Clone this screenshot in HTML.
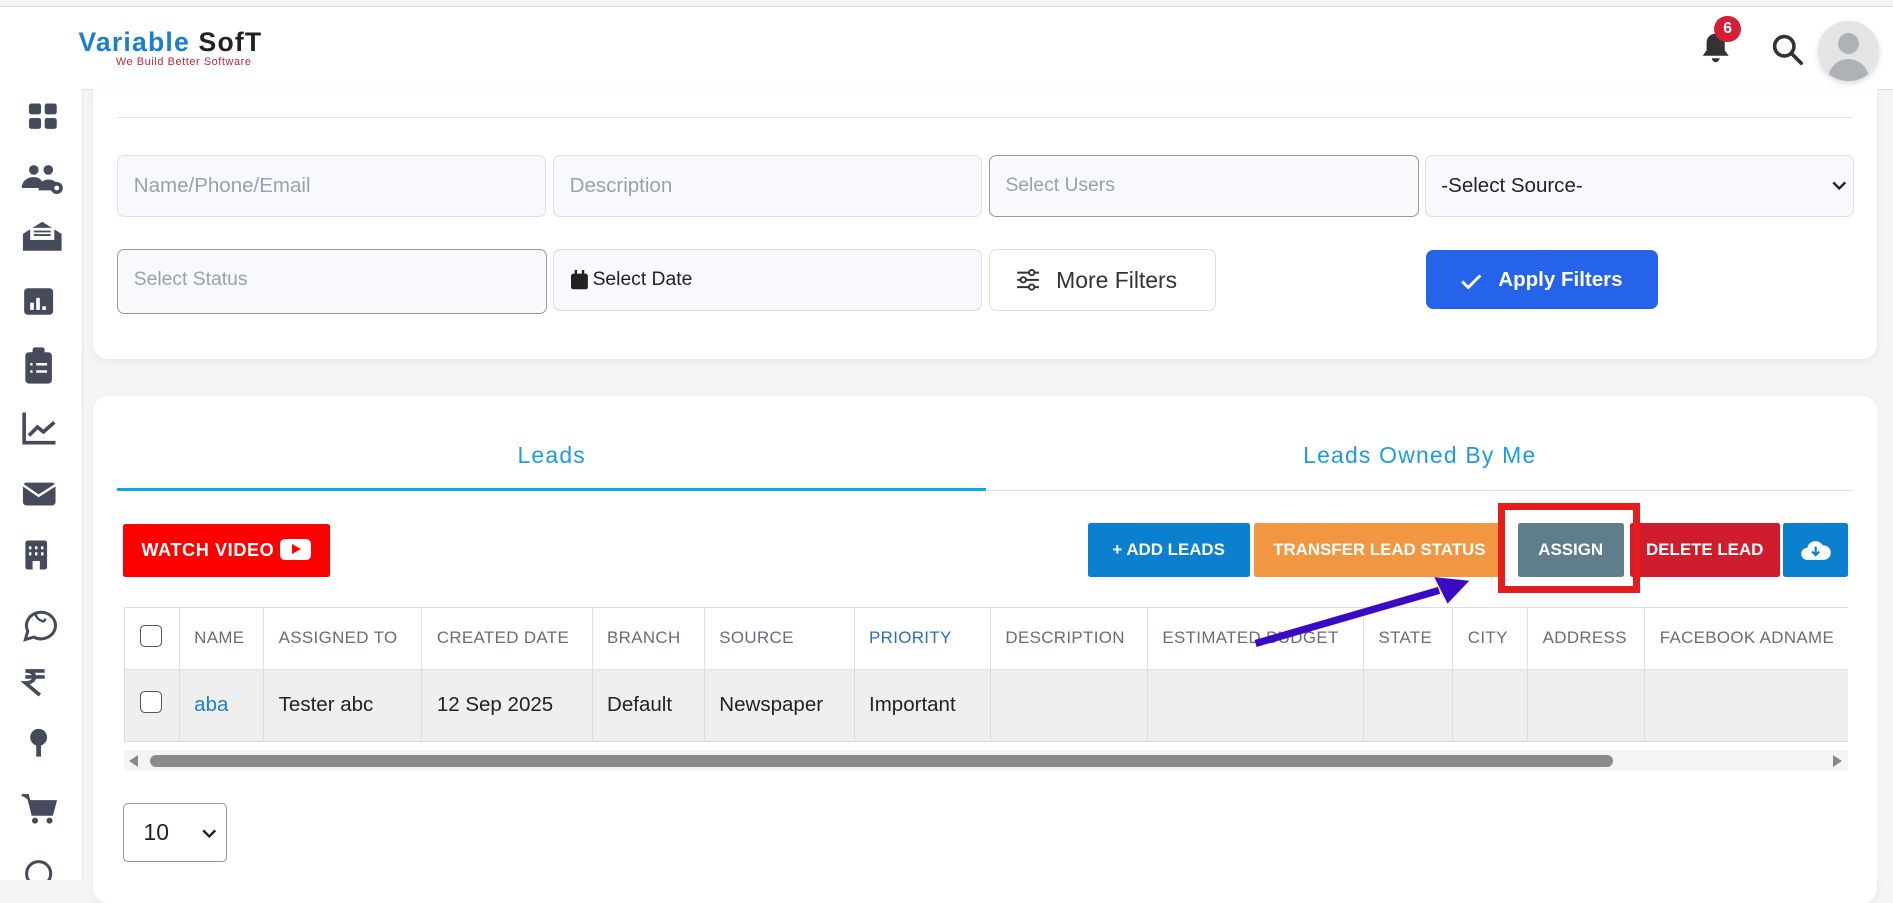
<!DOCTYPE html>
<html><head><meta charset="utf-8">
<style>
html,body{margin:0;padding:0;}
body{width:1568px;height:729px;overflow:hidden;zoom:1.2073;background:#f4f5f7;font-family:"Liberation Sans",sans-serif;position:relative;}
.abs{position:absolute;}
.hdr{left:0;top:5px;width:1568px;height:68px;background:#fff;border-top:1px solid #ddd;border-bottom:1px solid #ddd;}
.side{left:0;top:74px;width:68px;height:655px;background:#fff;border-right:1px solid #e6e6e6;}
.card{background:#fff;border-radius:12px;box-shadow:0 2px 6px rgba(0,0,0,.06);}
.inp{position:absolute;height:52px;border:1px solid #d8e0ea;border-radius:6px;background:#f7f9fc;box-sizing:border-box;padding-left:13px;line-height:50px;font-size:17px;color:#9aa1aa;}
.btn{position:absolute;color:#fff;font-weight:bold;font-size:14px;text-align:center;border-radius:2px;top:433px;height:45px;line-height:45px;white-space:nowrap;overflow:hidden;}
table{border-collapse:collapse;position:absolute;left:103px;top:503px;font-size:16px;table-layout:fixed;width:1428px;}
th{height:50px;font-weight:normal;color:#666e78;font-size:14px;letter-spacing:.3px;text-align:left;padding:0 12px;border:1px solid #e2e2e2;border-top:1px solid #ddd;white-space:nowrap;overflow:hidden;}
td{height:59px;background:#efefef;padding:0 12px;border:1px solid #dcdcdc;white-space:nowrap;color:#222;font-size:17px;overflow:hidden;}
.cb{display:inline-block;width:17px;height:17px;border:1px solid #555;border-radius:4px;background:#fff;}
</style></head><body>

<div class="abs hdr"></div>
<div class="abs" style="left:65px;top:22px;font-size:22px;color:#1a7fd0;letter-spacing:1px;font-weight:bold;">Variable <span style="color:#222">SofT</span></div>
<div class="abs" style="left:96px;top:46px;font-size:9px;color:#c0262d;letter-spacing:.5px;">We Build Better Software</div>
<svg class="abs" style="left:1408px;top:26px" width="26" height="28" viewBox="0 0 24 26"><path d="M12 2c-4 0-7 3-7 7v6l-3 4h20l-3-4V9c0-4-3-7-7-7z" fill="#333"/><path d="M9 21a3 3 0 0 0 6 0z" fill="#333"/></svg>
<div class="abs" style="left:1420px;top:13px;width:22px;height:22px;border-radius:50%;background:#d51f35;color:#fff;font-size:13px;font-weight:bold;text-align:center;line-height:22px;">6</div>
<svg class="abs" style="left:1467px;top:27px" width="28" height="28" viewBox="0 0 28 28"><circle cx="11" cy="11" r="8" fill="none" stroke="#333" stroke-width="3"/><path d="M17 17l8 8" stroke="#333" stroke-width="3" stroke-linecap="round"/></svg>
<div class="abs" style="left:1506px;top:17px;width:50px;height:50px;border-radius:50%;background:#e3e4e6;box-shadow:0 2px 5px rgba(0,0,0,.15);overflow:hidden;">
<div style="position:absolute;left:16px;top:10px;width:18px;height:18px;border-radius:50%;background:#aeb2b7"></div>
<div style="position:absolute;left:8px;top:32px;width:34px;height:26px;border-radius:17px 17px 0 0;background:#aeb2b7"></div></div>

<div class="abs side"></div>
<svg class="abs" style="left:0;top:74px" width="68" height="655" viewBox="0 0 68 655" fill="#454b5a">
<rect x="24" y="12" width="10" height="9" rx="2"/><rect x="37" y="12" width="10" height="9" rx="2"/><rect x="24" y="24" width="10" height="9" rx="2"/><rect x="37" y="24" width="10" height="9" rx="2"/>
<circle cx="28" cy="67" r="4"/><circle cx="40" cy="67" r="4"/><path d="M18 82c0-6 5-9 10-9s8 3 8 9z"/><path d="M32 84c0-6 4-9 8-9s7 2 8 5l-4 4z"/><circle cx="47" cy="82" r="5"/><circle cx="47" cy="82" r="2" fill="#fff"/>
<path d="M19 120l16-10 16 10v14H19z"/><rect x="25" y="115" width="20" height="10" fill="#fff"/><path d="M28 118h14M28 121h14" stroke="#454b5a" stroke-width="1.5"/>
<rect x="20" y="165" width="24" height="22" rx="3"/><rect x="25" y="177" width="3" height="6" fill="#fff"/><rect x="30" y="173" width="3" height="10" fill="#fff"/><rect x="35" y="180" width="3" height="3" fill="#fff"/>
<rect x="21" y="218" width="22" height="26" rx="3"/><rect x="27" y="214" width="10" height="7" rx="2"/><path d="M25 228h2M30 228h9M25 234h2M30 234h9" stroke="#fff" stroke-width="2"/>
<path d="M20 268v25h26" fill="none" stroke="#454b5a" stroke-width="3"/><path d="M24 287l7-7 5 4 9-8" fill="none" stroke="#454b5a" stroke-width="3"/>
<rect x="19" y="326" width="27" height="19" rx="3"/><path d="M19 328l13 9 14-9" fill="none" stroke="#fff" stroke-width="2"/>
<rect x="21" y="374" width="18" height="24" rx="2"/><path d="M24 380h2M29 380h2M34 380h2M24 385h2M29 385h2M34 385h2" stroke="#fff" stroke-width="2.5"/><rect x="27" y="391" width="6" height="7" fill="#fff"/>
<path d="M23 449l-2 7 7-2a12 11 0 1 0-5-5z" fill="none" stroke="#454b5a" stroke-width="2.5"/><path d="M29 434c1 4 3 6 7 7l2-2" fill="none" stroke="#454b5a" stroke-width="2"/>
<path d="M21 482h16M21 487h16M21 482c10 0 10 10 0 10l12 10" fill="none" stroke="#454b5a" stroke-width="3"/>
<circle cx="32" cy="537" r="7"/><rect x="30" y="542" width="4" height="11"/>
<path d="M18 585h5l4 16h16l3-11H25" fill="#454b5a" stroke="#454b5a" stroke-width="2"/><circle cx="29" cy="606" r="2.5"/><circle cx="41" cy="606" r="2.5"/>
<circle cx="32" cy="650" r="10" fill="none" stroke="#454b5a" stroke-width="2.5"/>
</svg>

<div class="abs card" style="left:77px;top:74px;width:1478px;height:223px;border-radius:0 0 12px 12px;"></div>
<div class="abs" style="left:97px;top:97px;width:1438px;height:1px;background:#e6e6e6"></div>
<div class="inp" style="left:97px;top:128px;width:355px;">Name/Phone/Email</div>
<div class="inp" style="left:458px;top:128px;width:355px;">Description</div>
<div class="inp" style="left:819px;top:128px;width:356px;border-color:#9a9a9a;font-size:16px;">Select Users</div>
<div class="inp" style="left:1180px;top:128px;width:356px;color:#222;font-size:17px;">-Select Source-<svg style="position:absolute;right:6px;top:20px" width="12" height="10" viewBox="0 0 12 10"><path d="M1 2l5 5 5-5" fill="none" stroke="#222" stroke-width="2"/></svg></div>
<div class="inp" style="left:97px;top:206px;width:356px;height:54px;border-color:#9a9a9a;font-size:16px;">Select Status</div>
<div class="inp" style="left:458px;top:206px;width:355px;color:#222;font-size:16px;padding-left:32px;"><svg style="position:absolute;left:14px;top:17px" width="14" height="16" viewBox="0 0 14 16"><rect x="0" y="3" width="14" height="13" rx="2" fill="#222"/><rect x="3" y="0" width="2" height="4" fill="#222"/><rect x="9" y="0" width="2" height="4" fill="#222"/></svg>Select Date</div>
<div class="inp" style="left:819px;top:206px;width:188px;background:#fff;color:#333;font-size:19px;padding-left:55px;"><svg style="position:absolute;left:22px;top:16px" width="20" height="18" viewBox="0 0 20 18" stroke="#333" stroke-width="1.6" fill="#fff"><path d="M1 3h18M1 9h18M1 15h18"/><circle cx="13" cy="3" r="2.2"/><circle cx="6" cy="9" r="2.2"/><circle cx="13" cy="15" r="2.2"/></svg>More Filters</div>
<div class="abs" style="left:1181px;top:207px;width:192px;height:49px;border-radius:6px;background:#2563eb;color:#fff;font-weight:bold;font-size:17px;line-height:49px;text-align:center;"><svg style="vertical-align:-3px;margin-right:14px" width="17" height="14" viewBox="0 0 17 14"><path d="M1 7l5 5L16 2" fill="none" stroke="#fff" stroke-width="2.4"/></svg>Apply Filters</div>

<div class="abs card" style="left:77px;top:328px;width:1478px;height:420px;"></div>
<div class="abs" style="left:97px;top:366px;width:720px;text-align:center;color:#1d9be6;font-size:19px;letter-spacing:1px;">Leads</div>
<div class="abs" style="left:817px;top:366px;width:718px;text-align:center;color:#1d9be6;font-size:19px;letter-spacing:1px;">Leads Owned By Me</div>
<div class="abs" style="left:97px;top:406px;width:1438px;height:1px;background:#e0e0e0"></div>
<div class="abs" style="left:97px;top:404px;width:720px;height:3px;background:#0ea5ef"></div>

<div class="btn" style="left:102px;top:434px;width:171px;height:44px;line-height:44px;background:#ff0000;font-size:15px;letter-spacing:.5px;">WATCH VIDEO <span style="display:inline-block;width:26px;height:17px;background:#fff;border-radius:4px;vertical-align:-3px;position:relative;"><span style="position:absolute;left:10px;top:4px;border-left:8px solid #f00;border-top:4.5px solid transparent;border-bottom:4.5px solid transparent;"></span></span></div>

<div class="btn" style="left:901px;width:134px;background:#0a80cf;">+ ADD LEADS</div>
<div class="btn" style="left:1039px;width:207px;background:#f39641;">TRANSFER LEAD STATUS</div>
<div class="btn" style="left:1257px;width:88px;background:#607d8b;">ASSIGN</div>
<div class="btn" style="left:1350px;width:124px;background:#d01c2c;">DELETE LEAD</div>
<div class="btn" style="left:1477px;width:54px;background:#0a80cf;"><svg style="vertical-align:-5px" width="26" height="20" viewBox="0 0 26 20"><path d="M6 19a5 5 0 0 1 0-10 7 7 0 0 1 13-2 6 6 0 0 1 1 12z" fill="#fff"/><path d="M13 8v7M10 12l3 3 3-3" fill="none" stroke="#0a80cf" stroke-width="1.8"/></svg></div>
<div class="abs" style="left:1241px;top:417px;width:106px;height:63px;border:6px solid #e61d1d;"></div>

<table>
<colgroup><col style="width:45px"><col style="width:70px"><col style="width:131px"><col style="width:141px"><col style="width:93px"><col style="width:124px"><col style="width:113px"><col style="width:130px"><col style="width:179px"><col style="width:74px"><col style="width:62px"><col style="width:97px"><col style="width:169px"></colgroup>
<tr><th><span class="cb"></span></th><th>NAME</th><th>ASSIGNED TO</th><th>CREATED DATE</th><th>BRANCH</th><th>SOURCE</th><th style="color:#2c6fb8">PRIORITY</th><th>DESCRIPTION</th><th>ESTIMATED BUDGET</th><th>STATE</th><th>CITY</th><th>ADDRESS</th><th>FACEBOOK ADNAME</th></tr>
<tr><td><span class="cb"></span></td><td style="color:#1a7fd0">aba</td><td>Tester abc</td><td>12 Sep 2025</td><td>Default</td><td>Newspaper</td><td>Important</td><td></td><td></td><td></td><td></td><td></td><td></td></tr>
</table>
<div class="abs" style="left:1531px;top:495px;width:24px;height:150px;background:#fff"></div>
<div class="abs" style="left:1555px;top:328px;width:13px;height:401px;background:#f4f5f7"></div>
<div class="abs" style="left:103px;top:621px;width:1428px;height:18px;background:#f4f4f4"></div>
<div class="abs" style="left:124px;top:625px;width:1212px;height:10px;border-radius:5px;background:#8a8a8a"></div>
<div class="abs" style="left:107px;top:625px;border-right:8px solid #888;border-top:5px solid transparent;border-bottom:5px solid transparent;"></div>
<div class="abs" style="left:1518px;top:625px;border-left:8px solid #888;border-top:5px solid transparent;border-bottom:5px solid transparent;"></div>

<svg class="abs" style="left:0;top:0" width="1568" height="729"><path d="M1040 533L1192 489" stroke="#3a0ac4" stroke-width="6"/><path d="M1217 481L1188 478 1199 500z" fill="#3a0ac4"/></svg>

<div class="abs" style="left:102px;top:665px;width:86px;height:49px;border:1px solid #999;border-radius:4px;box-sizing:border-box;background:#fff;font-size:19px;line-height:47px;padding-left:16px;color:#222;">10<svg style="position:absolute;right:8px;top:20px" width="12" height="9" viewBox="0 0 12 9"><path d="M1 2l5 5 5-5" fill="none" stroke="#222" stroke-width="2"/></svg></div>
</body></html>
